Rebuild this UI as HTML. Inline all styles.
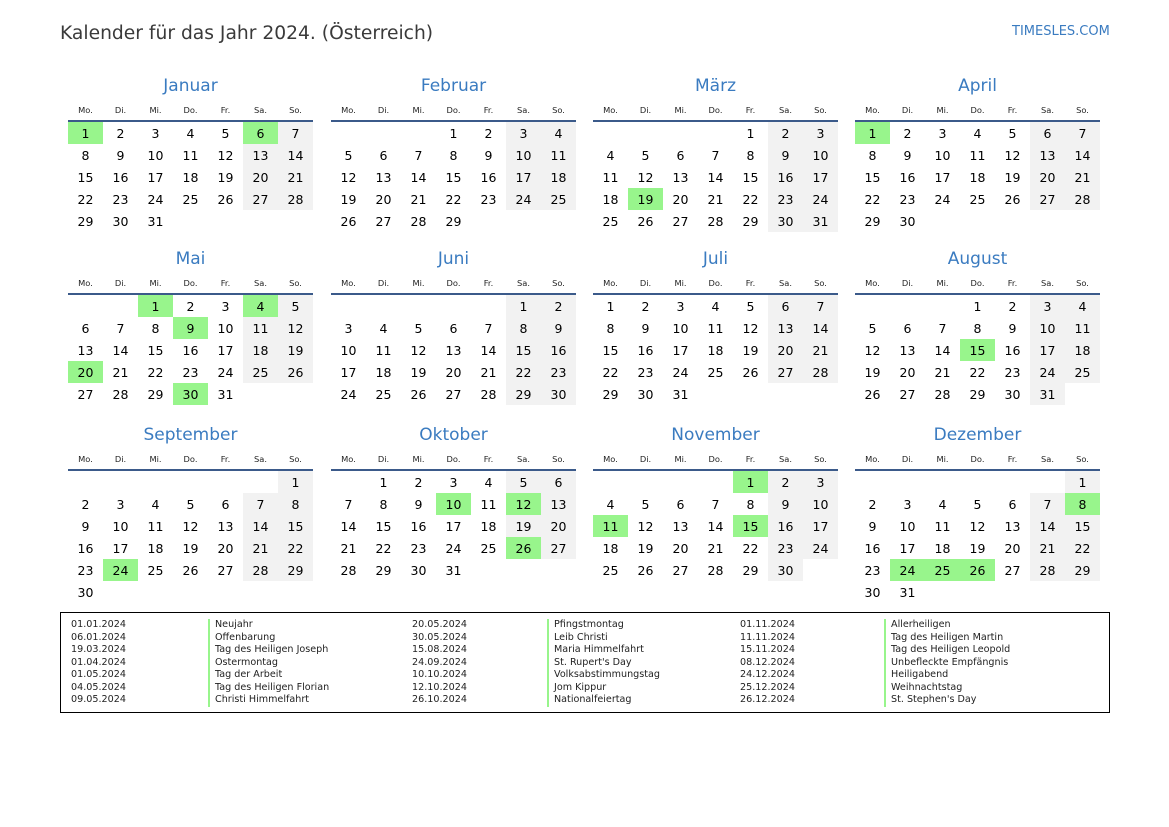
<!DOCTYPE html>
<html><head><meta charset="utf-8"><style>
body{margin:0;width:1169px;height:827px;background:#fff;font-family:"DejaVu Sans","Liberation Sans",sans-serif;position:relative;overflow:hidden;color:#000}
.t{position:absolute;left:60px;top:23px;font-size:18.7px;color:#3a3a3a}
.logo{position:absolute;left:1012px;top:24px;font-size:13px;color:#3a7bc0}
.m{position:absolute;width:245px}
.mt{height:26px;line-height:26px;text-align:center;font-size:17px;color:#3a7bc0}
.m table{border-collapse:collapse;width:245px;table-layout:fixed}
.m th{height:22px;font-size:8.3px;font-weight:normal;color:#222;border-bottom:2px solid #3b5a8a;padding:0;vertical-align:middle;box-sizing:border-box}
.m td{height:22px;padding:0;text-align:center;font-size:12.5px;width:35px}
.s{background:#f2f2f2}
.h{background:#98f58c}
.lg{position:absolute;left:60px;top:612px;width:1048px;height:99px;border:1px solid #000}
.lg div{position:absolute;font-size:9.6px;line-height:12.5px;color:#222;top:6px;white-space:nowrap}
.bar{border-left:2px solid #98f58c;padding-left:5px}
</style></head><body>
<div class="t">Kalender für das Jahr 2024. (Österreich)</div>
<div class="logo">TIMESLES.COM</div>

<div class="m" style="left:68px;top:73px"><div class="mt">Januar</div><table><tr><th>Mo.</th><th>Di.</th><th>Mi.</th><th>Do.</th><th>Fr.</th><th>Sa.</th><th>So.</th></tr>
<tr><td class="h">1</td><td>2</td><td>3</td><td>4</td><td>5</td><td class="h">6</td><td class="s">7</td></tr>
<tr><td>8</td><td>9</td><td>10</td><td>11</td><td>12</td><td class="s">13</td><td class="s">14</td></tr>
<tr><td>15</td><td>16</td><td>17</td><td>18</td><td>19</td><td class="s">20</td><td class="s">21</td></tr>
<tr><td>22</td><td>23</td><td>24</td><td>25</td><td>26</td><td class="s">27</td><td class="s">28</td></tr>
<tr><td>29</td><td>30</td><td>31</td><td></td><td></td><td></td><td></td></tr></table></div>

<div class="m" style="left:331px;top:73px"><div class="mt">Februar</div><table><tr><th>Mo.</th><th>Di.</th><th>Mi.</th><th>Do.</th><th>Fr.</th><th>Sa.</th><th>So.</th></tr>
<tr><td></td><td></td><td></td><td>1</td><td>2</td><td class="s">3</td><td class="s">4</td></tr>
<tr><td>5</td><td>6</td><td>7</td><td>8</td><td>9</td><td class="s">10</td><td class="s">11</td></tr>
<tr><td>12</td><td>13</td><td>14</td><td>15</td><td>16</td><td class="s">17</td><td class="s">18</td></tr>
<tr><td>19</td><td>20</td><td>21</td><td>22</td><td>23</td><td class="s">24</td><td class="s">25</td></tr>
<tr><td>26</td><td>27</td><td>28</td><td>29</td><td></td><td></td><td></td></tr></table></div>

<div class="m" style="left:593px;top:73px"><div class="mt">März</div><table><tr><th>Mo.</th><th>Di.</th><th>Mi.</th><th>Do.</th><th>Fr.</th><th>Sa.</th><th>So.</th></tr>
<tr><td></td><td></td><td></td><td></td><td>1</td><td class="s">2</td><td class="s">3</td></tr>
<tr><td>4</td><td>5</td><td>6</td><td>7</td><td>8</td><td class="s">9</td><td class="s">10</td></tr>
<tr><td>11</td><td>12</td><td>13</td><td>14</td><td>15</td><td class="s">16</td><td class="s">17</td></tr>
<tr><td>18</td><td class="h">19</td><td>20</td><td>21</td><td>22</td><td class="s">23</td><td class="s">24</td></tr>
<tr><td>25</td><td>26</td><td>27</td><td>28</td><td>29</td><td class="s">30</td><td class="s">31</td></tr></table></div>

<div class="m" style="left:855px;top:73px"><div class="mt">April</div><table><tr><th>Mo.</th><th>Di.</th><th>Mi.</th><th>Do.</th><th>Fr.</th><th>Sa.</th><th>So.</th></tr>
<tr><td class="h">1</td><td>2</td><td>3</td><td>4</td><td>5</td><td class="s">6</td><td class="s">7</td></tr>
<tr><td>8</td><td>9</td><td>10</td><td>11</td><td>12</td><td class="s">13</td><td class="s">14</td></tr>
<tr><td>15</td><td>16</td><td>17</td><td>18</td><td>19</td><td class="s">20</td><td class="s">21</td></tr>
<tr><td>22</td><td>23</td><td>24</td><td>25</td><td>26</td><td class="s">27</td><td class="s">28</td></tr>
<tr><td>29</td><td>30</td><td></td><td></td><td></td><td></td><td></td></tr></table></div>

<div class="m" style="left:68px;top:246px"><div class="mt">Mai</div><table><tr><th>Mo.</th><th>Di.</th><th>Mi.</th><th>Do.</th><th>Fr.</th><th>Sa.</th><th>So.</th></tr>
<tr><td></td><td></td><td class="h">1</td><td>2</td><td>3</td><td class="h">4</td><td class="s">5</td></tr>
<tr><td>6</td><td>7</td><td>8</td><td class="h">9</td><td>10</td><td class="s">11</td><td class="s">12</td></tr>
<tr><td>13</td><td>14</td><td>15</td><td>16</td><td>17</td><td class="s">18</td><td class="s">19</td></tr>
<tr><td class="h">20</td><td>21</td><td>22</td><td>23</td><td>24</td><td class="s">25</td><td class="s">26</td></tr>
<tr><td>27</td><td>28</td><td>29</td><td class="h">30</td><td>31</td><td></td><td></td></tr></table></div>

<div class="m" style="left:331px;top:246px"><div class="mt">Juni</div><table><tr><th>Mo.</th><th>Di.</th><th>Mi.</th><th>Do.</th><th>Fr.</th><th>Sa.</th><th>So.</th></tr>
<tr><td></td><td></td><td></td><td></td><td></td><td class="s">1</td><td class="s">2</td></tr>
<tr><td>3</td><td>4</td><td>5</td><td>6</td><td>7</td><td class="s">8</td><td class="s">9</td></tr>
<tr><td>10</td><td>11</td><td>12</td><td>13</td><td>14</td><td class="s">15</td><td class="s">16</td></tr>
<tr><td>17</td><td>18</td><td>19</td><td>20</td><td>21</td><td class="s">22</td><td class="s">23</td></tr>
<tr><td>24</td><td>25</td><td>26</td><td>27</td><td>28</td><td class="s">29</td><td class="s">30</td></tr></table></div>

<div class="m" style="left:593px;top:246px"><div class="mt">Juli</div><table><tr><th>Mo.</th><th>Di.</th><th>Mi.</th><th>Do.</th><th>Fr.</th><th>Sa.</th><th>So.</th></tr>
<tr><td>1</td><td>2</td><td>3</td><td>4</td><td>5</td><td class="s">6</td><td class="s">7</td></tr>
<tr><td>8</td><td>9</td><td>10</td><td>11</td><td>12</td><td class="s">13</td><td class="s">14</td></tr>
<tr><td>15</td><td>16</td><td>17</td><td>18</td><td>19</td><td class="s">20</td><td class="s">21</td></tr>
<tr><td>22</td><td>23</td><td>24</td><td>25</td><td>26</td><td class="s">27</td><td class="s">28</td></tr>
<tr><td>29</td><td>30</td><td>31</td><td></td><td></td><td></td><td></td></tr></table></div>

<div class="m" style="left:855px;top:246px"><div class="mt">August</div><table><tr><th>Mo.</th><th>Di.</th><th>Mi.</th><th>Do.</th><th>Fr.</th><th>Sa.</th><th>So.</th></tr>
<tr><td></td><td></td><td></td><td>1</td><td>2</td><td class="s">3</td><td class="s">4</td></tr>
<tr><td>5</td><td>6</td><td>7</td><td>8</td><td>9</td><td class="s">10</td><td class="s">11</td></tr>
<tr><td>12</td><td>13</td><td>14</td><td class="h">15</td><td>16</td><td class="s">17</td><td class="s">18</td></tr>
<tr><td>19</td><td>20</td><td>21</td><td>22</td><td>23</td><td class="s">24</td><td class="s">25</td></tr>
<tr><td>26</td><td>27</td><td>28</td><td>29</td><td>30</td><td class="s">31</td><td></td></tr></table></div>

<div class="m" style="left:68px;top:422px"><div class="mt">September</div><table><tr><th>Mo.</th><th>Di.</th><th>Mi.</th><th>Do.</th><th>Fr.</th><th>Sa.</th><th>So.</th></tr>
<tr><td></td><td></td><td></td><td></td><td></td><td></td><td class="s">1</td></tr>
<tr><td>2</td><td>3</td><td>4</td><td>5</td><td>6</td><td class="s">7</td><td class="s">8</td></tr>
<tr><td>9</td><td>10</td><td>11</td><td>12</td><td>13</td><td class="s">14</td><td class="s">15</td></tr>
<tr><td>16</td><td>17</td><td>18</td><td>19</td><td>20</td><td class="s">21</td><td class="s">22</td></tr>
<tr><td>23</td><td class="h">24</td><td>25</td><td>26</td><td>27</td><td class="s">28</td><td class="s">29</td></tr>
<tr><td>30</td><td></td><td></td><td></td><td></td><td></td><td></td></tr></table></div>

<div class="m" style="left:331px;top:422px"><div class="mt">Oktober</div><table><tr><th>Mo.</th><th>Di.</th><th>Mi.</th><th>Do.</th><th>Fr.</th><th>Sa.</th><th>So.</th></tr>
<tr><td></td><td>1</td><td>2</td><td>3</td><td>4</td><td class="s">5</td><td class="s">6</td></tr>
<tr><td>7</td><td>8</td><td>9</td><td class="h">10</td><td>11</td><td class="h">12</td><td class="s">13</td></tr>
<tr><td>14</td><td>15</td><td>16</td><td>17</td><td>18</td><td class="s">19</td><td class="s">20</td></tr>
<tr><td>21</td><td>22</td><td>23</td><td>24</td><td>25</td><td class="h">26</td><td class="s">27</td></tr>
<tr><td>28</td><td>29</td><td>30</td><td>31</td><td></td><td></td><td></td></tr></table></div>

<div class="m" style="left:593px;top:422px"><div class="mt">November</div><table><tr><th>Mo.</th><th>Di.</th><th>Mi.</th><th>Do.</th><th>Fr.</th><th>Sa.</th><th>So.</th></tr>
<tr><td></td><td></td><td></td><td></td><td class="h">1</td><td class="s">2</td><td class="s">3</td></tr>
<tr><td>4</td><td>5</td><td>6</td><td>7</td><td>8</td><td class="s">9</td><td class="s">10</td></tr>
<tr><td class="h">11</td><td>12</td><td>13</td><td>14</td><td class="h">15</td><td class="s">16</td><td class="s">17</td></tr>
<tr><td>18</td><td>19</td><td>20</td><td>21</td><td>22</td><td class="s">23</td><td class="s">24</td></tr>
<tr><td>25</td><td>26</td><td>27</td><td>28</td><td>29</td><td class="s">30</td><td></td></tr></table></div>

<div class="m" style="left:855px;top:422px"><div class="mt">Dezember</div><table><tr><th>Mo.</th><th>Di.</th><th>Mi.</th><th>Do.</th><th>Fr.</th><th>Sa.</th><th>So.</th></tr>
<tr><td></td><td></td><td></td><td></td><td></td><td></td><td class="s">1</td></tr>
<tr><td>2</td><td>3</td><td>4</td><td>5</td><td>6</td><td class="s">7</td><td class="h">8</td></tr>
<tr><td>9</td><td>10</td><td>11</td><td>12</td><td>13</td><td class="s">14</td><td class="s">15</td></tr>
<tr><td>16</td><td>17</td><td>18</td><td>19</td><td>20</td><td class="s">21</td><td class="s">22</td></tr>
<tr><td>23</td><td class="h">24</td><td class="h">25</td><td class="h">26</td><td>27</td><td class="s">28</td><td class="s">29</td></tr>
<tr><td>30</td><td>31</td><td></td><td></td><td></td><td></td><td></td></tr></table></div>

<div class="lg">
<div style="left:10px">01.01.2024<br>06.01.2024<br>19.03.2024<br>01.04.2024<br>01.05.2024<br>04.05.2024<br>09.05.2024</div>
<div class="bar" style="left:147px">Neujahr<br>Offenbarung<br>Tag des Heiligen Joseph<br>Ostermontag<br>Tag der Arbeit<br>Tag des Heiligen Florian<br>Christi Himmelfahrt</div>
<div style="left:351px">20.05.2024<br>30.05.2024<br>15.08.2024<br>24.09.2024<br>10.10.2024<br>12.10.2024<br>26.10.2024</div>
<div class="bar" style="left:486px">Pfingstmontag<br>Leib Christi<br>Maria Himmelfahrt<br>St. Rupert's Day<br>Volksabstimmungstag<br>Jom Kippur<br>Nationalfeiertag</div>
<div style="left:679px">01.11.2024<br>11.11.2024<br>15.11.2024<br>08.12.2024<br>24.12.2024<br>25.12.2024<br>26.12.2024</div>
<div class="bar" style="left:823px">Allerheiligen<br>Tag des Heiligen Martin<br>Tag des Heiligen Leopold<br>Unbefleckte Empfängnis<br>Heiligabend<br>Weihnachtstag<br>St. Stephen's Day</div>
</div>
</body></html>
